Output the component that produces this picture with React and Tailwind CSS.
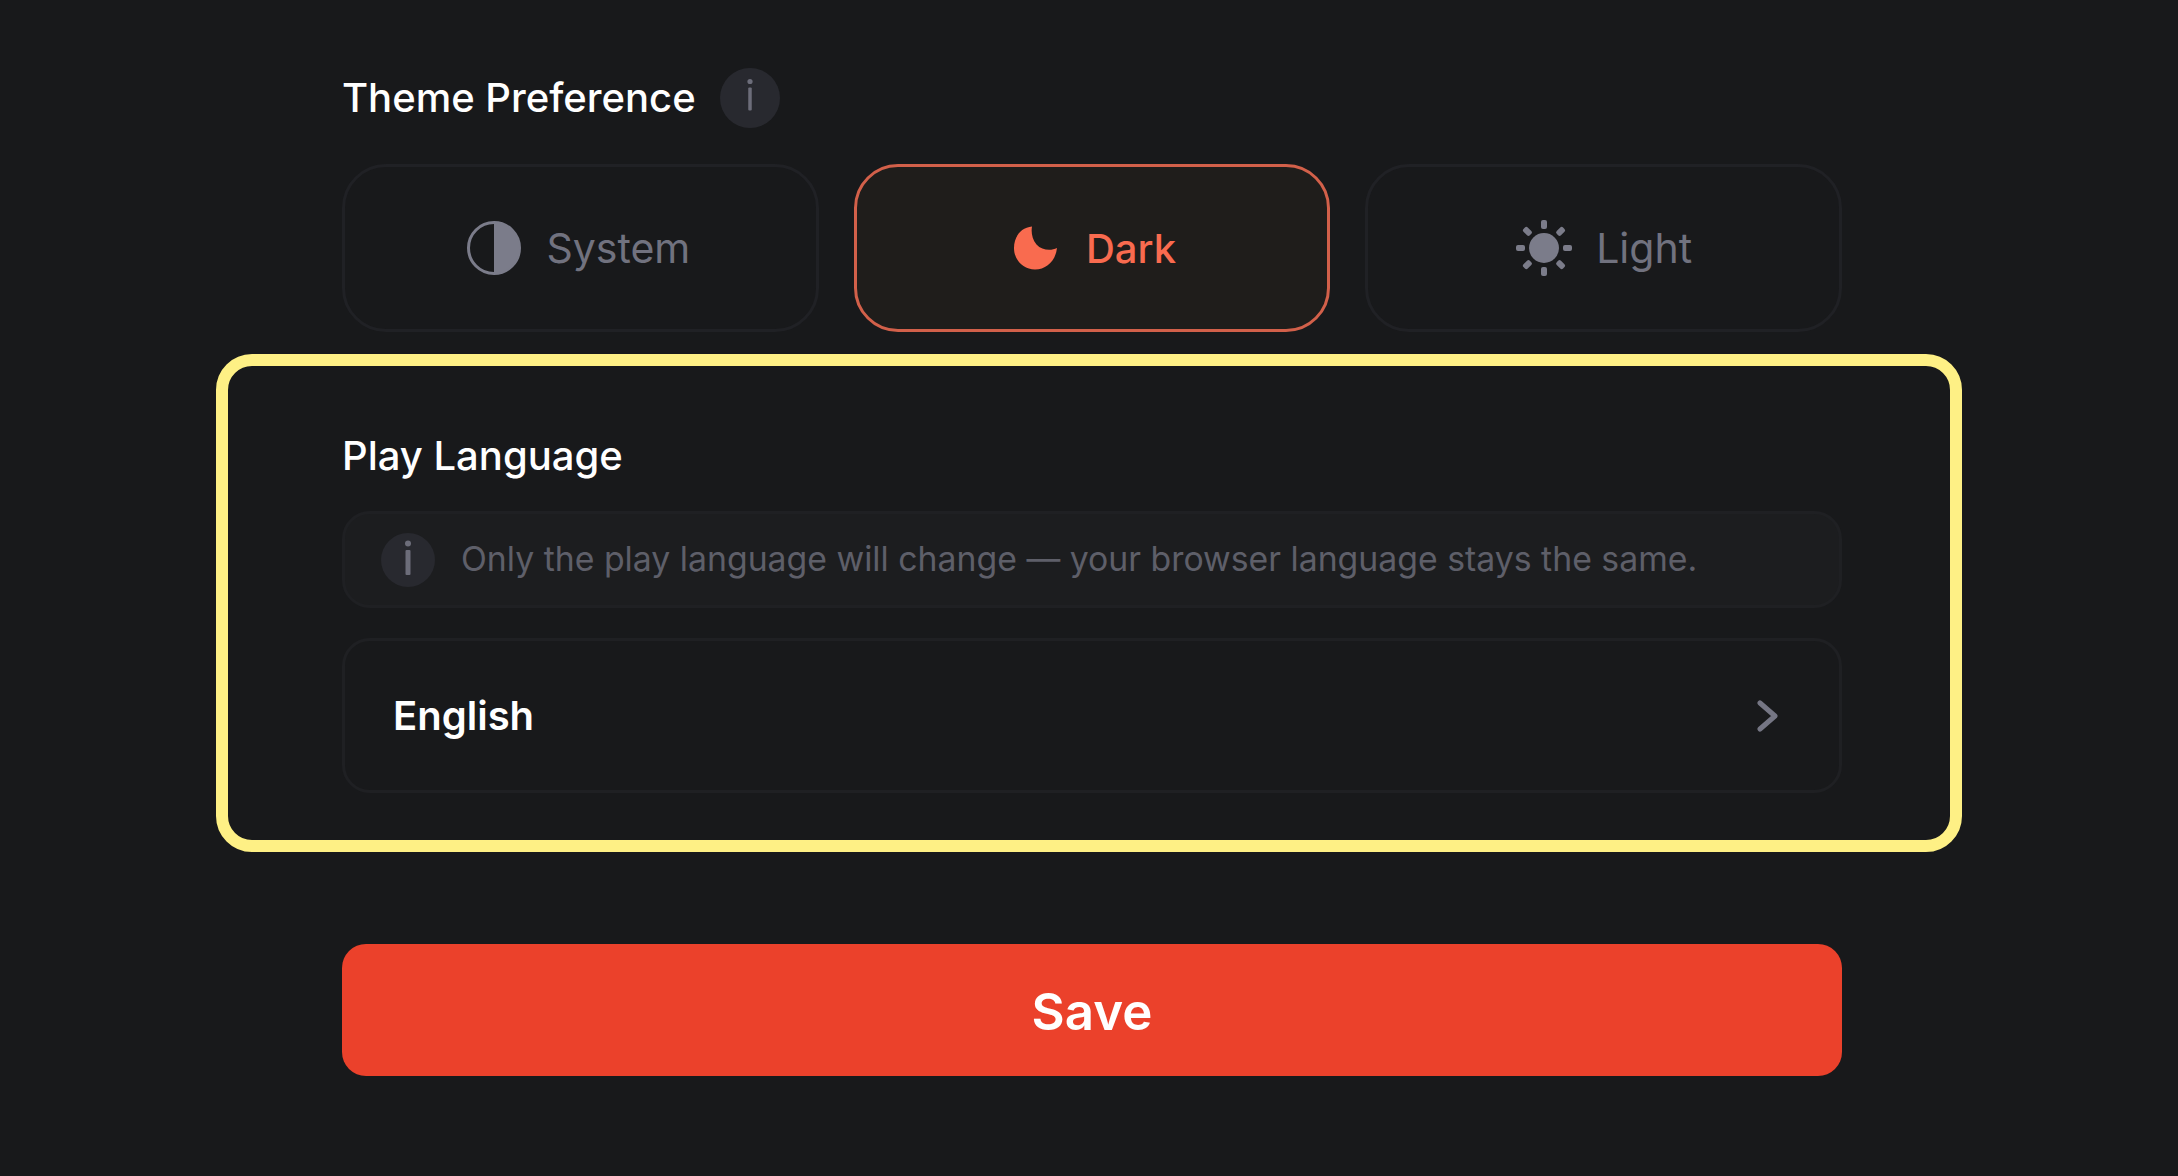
function InfoBadge({ size, dotR, stemTop, stemH, stemW }) {
  return (
    <span className={`flex shrink-0 items-center justify-center rounded-full bg-[#28292f] ${size}`}>
      <svg width="10" height="44" viewBox="0 0 10 44" className="text-[#6c6d7a]">
        <circle cx="5" cy="5.500" r={dotR} fill="currentColor" />
        <rect x={5 - stemW / 2} y={stemTop} width={stemW} height={stemH} rx="1" fill="currentColor" />
      </svg>
    </span>
  );
}

function SystemIcon() {
  return (
    <svg width="56" height="56" viewBox="0 0 56 56">
      <circle cx="28" cy="28" r="25.500" fill="none" stroke="#7b7c8a" strokeWidth="3" />
      <path d="M28 2.500a25.500 25.500 0 0 1 0 51z" fill="#7b7c8a" />
    </svg>
  );
}

function MoonIcon() {
  return (
    <svg width="44" height="44" viewBox="0 0 44 44">
      <path
        d="M18 0.500C7 1.500 0 10.500 0 22c0 12 9 21.500 21 21.500 11.500 0 20.500-8.500 22-21.500-6 3-15 2.500-20.500-3.500C18 13 17 6 18 0.500z"
        fill="#f96b4f"
      />
    </svg>
  );
}

function SunIcon() {
  return (
    <svg width="56" height="56" viewBox="0 0 56 56" fill="#7b7c8a">
      <circle cx="28" cy="28" r="15" />
      <rect x="25" y="0" width="6" height="9" rx="2" />
      <rect x="25" y="47" width="6" height="9" rx="2" />
      <rect x="0" y="25" width="9" height="6" rx="2" />
      <rect x="47" y="25" width="9" height="6" rx="2" />
      <rect x="25" y="0" width="6" height="9" rx="2" transform="rotate(45 28 28)" />
      <rect x="25" y="47" width="6" height="9" rx="2" transform="rotate(45 28 28)" />
      <rect x="0" y="25" width="9" height="6" rx="2" transform="rotate(45 28 28)" />
      <rect x="47" y="25" width="9" height="6" rx="2" transform="rotate(45 28 28)" />
    </svg>
  );
}

function ThemeOption({ icon, label, active, nudge }) {
  return (
    <button
      type="button"
      className={
        active
          ? `flex h-[168px] items-center justify-center gap-7 rounded-[44px] border-[3px] border-[#d2604a] bg-[#1f1d1b] text-[40px] font-medium text-[#f96b4f] ${nudge}`
          : `flex h-[168px] items-center justify-center gap-6 rounded-[44px] border-[3px] border-[#202125] text-[41px] text-[#71727f] ${nudge}`
      }
    >
      {icon}
      <span className="pt-[2px]">{label}</span>
    </button>
  );
}

export default function App() {
  return (
    <div className="min-h-[1176px] bg-[#18191b] pl-[216px] pt-[68px] font-['Inter',sans-serif]">
      <div className="ml-[126px] w-[1500px]">
        <div className="flex h-[60px] items-center gap-[24px]">
          <h2 className="text-[40px] font-medium text-white">Theme Preference</h2>
          <InfoBadge size="h-[60px] w-[60px]" dotR={2.6} stemTop={11.5} stemH={23} stemW={3.5} />
        </div>
        <div className="mt-[36px] grid grid-cols-3 gap-[35px]">
          <ThemeOption icon={<SystemIcon />} label="System" nudge="pr-[4px]" />
          <ThemeOption icon={<MoonIcon />} label="Dark" active nudge="pl-[6px]" />
          <ThemeOption icon={<SunIcon />} label="Light" nudge="pl-[1px]" />
        </div>
      </div>

      <section className="mt-[22px] h-[498px] w-[1746px] rounded-[36px] border-[12px] border-[#fef085] pl-[114px] pr-[108px] pt-[66px]">
        <h2 className="text-[40px] font-medium leading-[48px] text-white">Play Language</h2>
        <div className="mt-[31px] flex h-[97px] items-center gap-[26px] rounded-[28px] border-[3px] border-[#1f2023] bg-[#1c1d1f] pl-[36px] text-[33.8px] text-[#5e5f69]">
          <InfoBadge size="h-[54px] w-[54px]" dotR={3} stemTop={12} stemH={25} stemW={5} />
          <span>Only the play language will change — your browser language stays the same.</span>
        </div>
        <button
          type="button"
          className="mt-[30px] flex h-[155px] w-full items-center justify-between rounded-[28px] border-[3px] border-[#1f2023] pl-[48px] pr-[61px] text-[40px] font-semibold text-white"
        >
          English
          <svg width="21" height="32" viewBox="0 0 21 32" fill="none" stroke="#757684" strokeWidth="5" strokeLinecap="round" strokeLinejoin="round">
            <path d="M3 3l15 13L3 29" />
          </svg>
        </button>
      </section>

      <button
        type="button"
        className="ml-[126px] mt-[92px] flex h-[132px] w-[1500px] items-center justify-center rounded-[24px] bg-[#eb412b] pt-[4px] text-[51px] font-semibold text-white"
      >
        Save
      </button>
    </div>
  );
}
